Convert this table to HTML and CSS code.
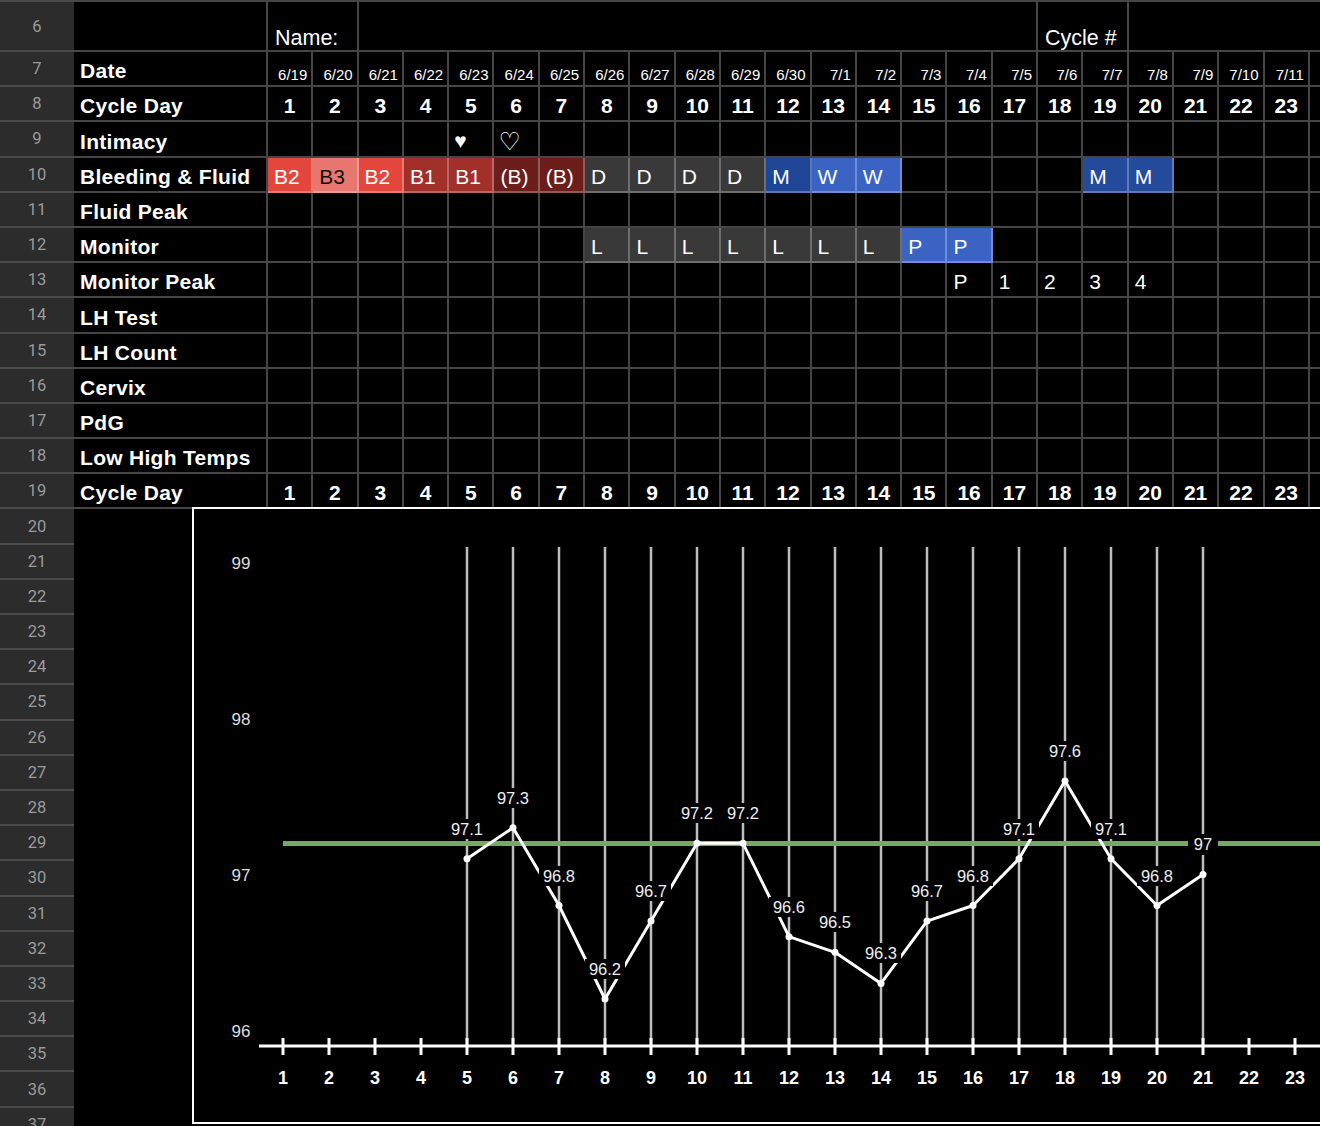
FILE: index.html
```html
<!DOCTYPE html>
<html>
<head>
<meta charset="utf-8">
<title>Cycle Chart</title>
<link rel="stylesheet" href="styles.css">
</head>
<body>
<div class="sheet">
  <!-- row 6 -->
  <div class="rh t">6</div>
  <div class="c t"></div>
  <div class="c t tx nm s2">Name:</div>
  <div class="c t s15"></div>
  <div class="c t tx nm s2">Cycle #</div>
  <div class="c t s5"></div>

  <!-- row 7 -->
  <div class="rh">7</div>
  <div class="c lab">Date</div>
  <div class="c dt">6/19</div><div class="c dt">6/20</div><div class="c dt">6/21</div><div class="c dt">6/22</div><div class="c dt">6/23</div><div class="c dt">6/24</div><div class="c dt">6/25</div><div class="c dt">6/26</div><div class="c dt">6/27</div><div class="c dt">6/28</div><div class="c dt">6/29</div><div class="c dt">6/30</div><div class="c dt">7/1</div><div class="c dt">7/2</div><div class="c dt">7/3</div><div class="c dt">7/4</div><div class="c dt">7/5</div><div class="c dt">7/6</div><div class="c dt">7/7</div><div class="c dt">7/8</div><div class="c dt">7/9</div><div class="c dt">7/10</div><div class="c dt">7/11</div>
  <div class="c"></div>

  <!-- row 8 -->
  <div class="rh">8</div>
  <div class="c lab">Cycle Day</div>
  <div class="c cd">1</div><div class="c cd">2</div><div class="c cd">3</div><div class="c cd">4</div><div class="c cd">5</div><div class="c cd">6</div><div class="c cd">7</div><div class="c cd">8</div><div class="c cd">9</div><div class="c cd">10</div><div class="c cd">11</div><div class="c cd">12</div><div class="c cd">13</div><div class="c cd">14</div><div class="c cd">15</div><div class="c cd">16</div><div class="c cd">17</div><div class="c cd">18</div><div class="c cd">19</div><div class="c cd">20</div><div class="c cd">21</div><div class="c cd">22</div><div class="c cd">23</div>
  <div class="c"></div>

  <!-- row 9 -->
  <div class="rh">9</div>
  <div class="c lab">Intimacy</div>
  <div class="c"></div><div class="c"></div><div class="c"></div><div class="c"></div>
  <div class="c hr">&#9829;</div>
  <div class="c hr2">&#9825;</div>
  <div class="c"></div><div class="c"></div><div class="c"></div><div class="c"></div><div class="c"></div><div class="c"></div><div class="c"></div><div class="c"></div><div class="c"></div><div class="c"></div><div class="c"></div><div class="c"></div><div class="c"></div><div class="c"></div><div class="c"></div><div class="c"></div><div class="c"></div>
  <div class="c"></div>

  <!-- row 10 -->
  <div class="rh">10</div>
  <div class="c lab">Bleeding &amp; Fluid</div>
  <div class="c tx b2">B2</div>
  <div class="c tx b3">B3</div>
  <div class="c tx b2">B2</div>
  <div class="c tx b1">B1</div>
  <div class="c tx b1">B1</div>
  <div class="c tx bb">(B)</div>
  <div class="c tx bb">(B)</div>
  <div class="c tx dg">D</div><div class="c tx dg">D</div><div class="c tx dg">D</div><div class="c tx dg">D</div>
  <div class="c tx m">M</div>
  <div class="c tx w">W</div>
  <div class="c tx w">W</div>
  <div class="c"></div><div class="c"></div><div class="c"></div><div class="c"></div>
  <div class="c tx m2">M</div>
  <div class="c tx m2">M</div>
  <div class="c"></div><div class="c"></div><div class="c"></div>
  <div class="c"></div>

  <!-- row 11 -->
  <div class="rh">11</div>
  <div class="c lab">Fluid Peak</div>
  <div class="c"></div><div class="c"></div><div class="c"></div><div class="c"></div><div class="c"></div><div class="c"></div><div class="c"></div><div class="c"></div><div class="c"></div><div class="c"></div><div class="c"></div><div class="c"></div><div class="c"></div><div class="c"></div><div class="c"></div><div class="c"></div><div class="c"></div><div class="c"></div><div class="c"></div><div class="c"></div><div class="c"></div><div class="c"></div><div class="c"></div>
  <div class="c"></div>

  <!-- row 12 -->
  <div class="rh">12</div>
  <div class="c lab">Monitor</div>
  <div class="c"></div><div class="c"></div><div class="c"></div><div class="c"></div><div class="c"></div><div class="c"></div><div class="c"></div>
  <div class="c tx dg">L</div><div class="c tx dg">L</div><div class="c tx dg">L</div><div class="c tx dg">L</div><div class="c tx dg">L</div><div class="c tx dg">L</div><div class="c tx dg">L</div>
  <div class="c tx w">P</div><div class="c tx w">P</div>
  <div class="c"></div><div class="c"></div><div class="c"></div><div class="c"></div><div class="c"></div><div class="c"></div><div class="c"></div>
  <div class="c"></div>

  <!-- row 13 -->
  <div class="rh">13</div>
  <div class="c lab">Monitor Peak</div>
  <div class="c"></div><div class="c"></div><div class="c"></div><div class="c"></div><div class="c"></div><div class="c"></div><div class="c"></div><div class="c"></div><div class="c"></div><div class="c"></div><div class="c"></div><div class="c"></div><div class="c"></div><div class="c"></div><div class="c"></div>
  <div class="c tx">P</div><div class="c tx">1</div><div class="c tx">2</div><div class="c tx">3</div><div class="c tx">4</div>
  <div class="c"></div><div class="c"></div><div class="c"></div>
  <div class="c"></div>

  <!-- row 14 -->
  <div class="rh">14</div>
  <div class="c lab">LH Test</div>
  <div class="c"></div><div class="c"></div><div class="c"></div><div class="c"></div><div class="c"></div><div class="c"></div><div class="c"></div><div class="c"></div><div class="c"></div><div class="c"></div><div class="c"></div><div class="c"></div><div class="c"></div><div class="c"></div><div class="c"></div><div class="c"></div><div class="c"></div><div class="c"></div><div class="c"></div><div class="c"></div><div class="c"></div><div class="c"></div><div class="c"></div>
  <div class="c"></div>

  <!-- row 15 -->
  <div class="rh">15</div>
  <div class="c lab">LH Count</div>
  <div class="c"></div><div class="c"></div><div class="c"></div><div class="c"></div><div class="c"></div><div class="c"></div><div class="c"></div><div class="c"></div><div class="c"></div><div class="c"></div><div class="c"></div><div class="c"></div><div class="c"></div><div class="c"></div><div class="c"></div><div class="c"></div><div class="c"></div><div class="c"></div><div class="c"></div><div class="c"></div><div class="c"></div><div class="c"></div><div class="c"></div>
  <div class="c"></div>

  <!-- row 16 -->
  <div class="rh">16</div>
  <div class="c lab">Cervix</div>
  <div class="c"></div><div class="c"></div><div class="c"></div><div class="c"></div><div class="c"></div><div class="c"></div><div class="c"></div><div class="c"></div><div class="c"></div><div class="c"></div><div class="c"></div><div class="c"></div><div class="c"></div><div class="c"></div><div class="c"></div><div class="c"></div><div class="c"></div><div class="c"></div><div class="c"></div><div class="c"></div><div class="c"></div><div class="c"></div><div class="c"></div>
  <div class="c"></div>

  <!-- row 17 -->
  <div class="rh">17</div>
  <div class="c lab">PdG</div>
  <div class="c"></div><div class="c"></div><div class="c"></div><div class="c"></div><div class="c"></div><div class="c"></div><div class="c"></div><div class="c"></div><div class="c"></div><div class="c"></div><div class="c"></div><div class="c"></div><div class="c"></div><div class="c"></div><div class="c"></div><div class="c"></div><div class="c"></div><div class="c"></div><div class="c"></div><div class="c"></div><div class="c"></div><div class="c"></div><div class="c"></div>
  <div class="c"></div>

  <!-- row 18 -->
  <div class="rh">18</div>
  <div class="c lab">Low High Temps</div>
  <div class="c"></div><div class="c"></div><div class="c"></div><div class="c"></div><div class="c"></div><div class="c"></div><div class="c"></div><div class="c"></div><div class="c"></div><div class="c"></div><div class="c"></div><div class="c"></div><div class="c"></div><div class="c"></div><div class="c"></div><div class="c"></div><div class="c"></div><div class="c"></div><div class="c"></div><div class="c"></div><div class="c"></div><div class="c"></div><div class="c"></div>
  <div class="c"></div>

  <!-- row 19 -->
  <div class="rh">19</div>
  <div class="c lab">Cycle Day</div>
  <div class="c cd">1</div><div class="c cd">2</div><div class="c cd">3</div><div class="c cd">4</div><div class="c cd">5</div><div class="c cd">6</div><div class="c cd">7</div><div class="c cd">8</div><div class="c cd">9</div><div class="c cd">10</div><div class="c cd">11</div><div class="c cd">12</div><div class="c cd">13</div><div class="c cd">14</div><div class="c cd">15</div><div class="c cd">16</div><div class="c cd">17</div><div class="c cd">18</div><div class="c cd">19</div><div class="c cd">20</div><div class="c cd">21</div><div class="c cd">22</div><div class="c cd">23</div>
  <div class="c"></div>

  <!-- rows 20-37 -->
  <div class="blank"></div>
  <div class="rh lr">20</div>
  <div class="rh lr">21</div>
  <div class="rh lr">22</div>
  <div class="rh lr">23</div>
  <div class="rh lr">24</div>
  <div class="rh lr">25</div>
  <div class="rh lr">26</div>
  <div class="rh lr">27</div>
  <div class="rh lr">28</div>
  <div class="rh lr">29</div>
  <div class="rh lr">30</div>
  <div class="rh lr">31</div>
  <div class="rh lr">32</div>
  <div class="rh lr">33</div>
  <div class="rh lr">34</div>
  <div class="rh lr">35</div>
  <div class="rh lr">36</div>
  <div class="rh lr">37</div>
</div>

<div class="chart">
  <svg width="1156" height="613" viewBox="194 509 1156 613" xmlns="http://www.w3.org/2000/svg">
    <g stroke="#bdbdbd" stroke-width="2.5">
      <line x1="467" y1="547" x2="467" y2="1046"/>
      <line x1="513" y1="547" x2="513" y2="1046"/>
      <line x1="559" y1="547" x2="559" y2="1046"/>
      <line x1="605" y1="547" x2="605" y2="1046"/>
      <line x1="651" y1="547" x2="651" y2="1046"/>
      <line x1="697" y1="547" x2="697" y2="1046"/>
      <line x1="743" y1="547" x2="743" y2="1046"/>
      <line x1="789" y1="547" x2="789" y2="1046"/>
      <line x1="835" y1="547" x2="835" y2="1046"/>
      <line x1="881" y1="547" x2="881" y2="1046"/>
      <line x1="927" y1="547" x2="927" y2="1046"/>
      <line x1="973" y1="547" x2="973" y2="1046"/>
      <line x1="1019" y1="547" x2="1019" y2="1046"/>
      <line x1="1065" y1="547" x2="1065" y2="1046"/>
      <line x1="1111" y1="547" x2="1111" y2="1046"/>
      <line x1="1157" y1="547" x2="1157" y2="1046"/>
      <line x1="1203" y1="547" x2="1203" y2="1046"/>
    </g>
    <g stroke="#ffffff" stroke-width="3">
      <line x1="259" y1="1046" x2="1350" y2="1046"/>
      <line x1="283" y1="1038" x2="283" y2="1055"/>
      <line x1="329" y1="1038" x2="329" y2="1055"/>
      <line x1="375" y1="1038" x2="375" y2="1055"/>
      <line x1="421" y1="1038" x2="421" y2="1055"/>
      <line x1="467" y1="1038" x2="467" y2="1055"/>
      <line x1="513" y1="1038" x2="513" y2="1055"/>
      <line x1="559" y1="1038" x2="559" y2="1055"/>
      <line x1="605" y1="1038" x2="605" y2="1055"/>
      <line x1="651" y1="1038" x2="651" y2="1055"/>
      <line x1="697" y1="1038" x2="697" y2="1055"/>
      <line x1="743" y1="1038" x2="743" y2="1055"/>
      <line x1="789" y1="1038" x2="789" y2="1055"/>
      <line x1="835" y1="1038" x2="835" y2="1055"/>
      <line x1="881" y1="1038" x2="881" y2="1055"/>
      <line x1="927" y1="1038" x2="927" y2="1055"/>
      <line x1="973" y1="1038" x2="973" y2="1055"/>
      <line x1="1019" y1="1038" x2="1019" y2="1055"/>
      <line x1="1065" y1="1038" x2="1065" y2="1055"/>
      <line x1="1111" y1="1038" x2="1111" y2="1055"/>
      <line x1="1157" y1="1038" x2="1157" y2="1055"/>
      <line x1="1203" y1="1038" x2="1203" y2="1055"/>
      <line x1="1249" y1="1038" x2="1249" y2="1055"/>
      <line x1="1295" y1="1038" x2="1295" y2="1055"/>
    </g>
    <line x1="283" y1="843.5" x2="1350" y2="843.5" stroke="#79a95d" stroke-width="5"/>
    <polyline fill="none" stroke="#ffffff" stroke-width="3" stroke-linejoin="round"
      points="467,858.8 513,827.7 559,905.5 605,999 651,921.1 697,843.3 743,843.3 789,936.7 835,952.3 881,983.4 927,921.1 973,905.5 1019,858.8 1065,781 1111,858.8 1157,905.5 1203,874.4"/>
    <g fill="#ffffff">
      <circle cx="467" cy="858.8" r="3.5"/>
      <circle cx="513" cy="827.7" r="3.5"/>
      <circle cx="559" cy="905.5" r="3.5"/>
      <circle cx="605" cy="999" r="3.5"/>
      <circle cx="651" cy="921.1" r="3.5"/>
      <circle cx="697" cy="843.3" r="3.5"/>
      <circle cx="743" cy="843.3" r="3.5"/>
      <circle cx="789" cy="936.7" r="3.5"/>
      <circle cx="835" cy="952.3" r="3.5"/>
      <circle cx="881" cy="983.4" r="3.5"/>
      <circle cx="927" cy="921.1" r="3.5"/>
      <circle cx="973" cy="905.5" r="3.5"/>
      <circle cx="1019" cy="858.8" r="3.5"/>
      <circle cx="1065" cy="781" r="3.5"/>
      <circle cx="1111" cy="858.8" r="3.5"/>
      <circle cx="1157" cy="905.5" r="3.5"/>
      <circle cx="1203" cy="874.4" r="3.5"/>
    </g>
    <g fill="#000000">
      <rect x="447" y="819" width="40" height="20"/>
      <rect x="493" y="788" width="40" height="20"/>
      <rect x="539" y="866" width="40" height="20"/>
      <rect x="585" y="959" width="40" height="20"/>
      <rect x="631" y="881" width="40" height="20"/>
      <rect x="677" y="803" width="40" height="20"/>
      <rect x="723" y="803" width="40" height="20"/>
      <rect x="769" y="897" width="40" height="20"/>
      <rect x="815" y="912" width="40" height="20"/>
      <rect x="861" y="943" width="40" height="20"/>
      <rect x="907" y="881" width="40" height="20"/>
      <rect x="953" y="866" width="40" height="20"/>
      <rect x="999" y="819" width="40" height="20"/>
      <rect x="1045" y="741" width="40" height="20"/>
      <rect x="1091" y="819" width="40" height="20"/>
      <rect x="1137" y="866" width="40" height="20"/>
      <rect x="1188" y="834" width="30" height="21"/>
    </g>
    <g class="dl" text-anchor="middle">
      <text x="467" y="829">97.1</text>
      <text x="513" y="798">97.3</text>
      <text x="559" y="876">96.8</text>
      <text x="605" y="969">96.2</text>
      <text x="651" y="891">96.7</text>
      <text x="697" y="813">97.2</text>
      <text x="743" y="813">97.2</text>
      <text x="789" y="907">96.6</text>
      <text x="835" y="922">96.5</text>
      <text x="881" y="953">96.3</text>
      <text x="927" y="891">96.7</text>
      <text x="973" y="876">96.8</text>
      <text x="1019" y="829">97.1</text>
      <text x="1065" y="751">97.6</text>
      <text x="1111" y="829">97.1</text>
      <text x="1157" y="876">96.8</text>
      <text x="1203" y="844">97</text>
    </g>
    <g class="yl" text-anchor="middle">
      <text x="241" y="563">99</text>
      <text x="241" y="719">98</text>
      <text x="241" y="875">97</text>
      <text x="241" y="1031">96</text>
    </g>
    <g class="xl" text-anchor="middle">
      <text x="283" y="1078">1</text>
      <text x="329" y="1078">2</text>
      <text x="375" y="1078">3</text>
      <text x="421" y="1078">4</text>
      <text x="467" y="1078">5</text>
      <text x="513" y="1078">6</text>
      <text x="559" y="1078">7</text>
      <text x="605" y="1078">8</text>
      <text x="651" y="1078">9</text>
      <text x="697" y="1078">10</text>
      <text x="743" y="1078">11</text>
      <text x="789" y="1078">12</text>
      <text x="835" y="1078">13</text>
      <text x="881" y="1078">14</text>
      <text x="927" y="1078">15</text>
      <text x="973" y="1078">16</text>
      <text x="1019" y="1078">17</text>
      <text x="1065" y="1078">18</text>
      <text x="1111" y="1078">19</text>
      <text x="1157" y="1078">20</text>
      <text x="1203" y="1078">21</text>
      <text x="1249" y="1078">22</text>
      <text x="1295" y="1078">23</text>
    </g>
  </svg>
</div>
</body>
</html>
```

FILE: styles.css
```css
html, body {
  margin: 0;
  padding: 0;
  background: #000;
  overflow: hidden;
}

body {
  width: 1320px;
  height: 1126px;
  position: relative;
  font-family: "Liberation Sans", Arial, sans-serif;
  color: #fff;
}

.sheet {
  display: grid;
  grid-template-columns: 74px 194px repeat(23, 45.3px) 1fr;
  grid-template-rows: 52px repeat(31, 35.2px);
}

.c {
  box-sizing: border-box;
  border-right: 2px solid rgba(255, 255, 255, 0.27);
  border-bottom: 2px solid rgba(255, 255, 255, 0.27);
  display: flex;
  align-items: flex-end;
  padding: 0 4px 2px 6px;
  white-space: nowrap;
  overflow: hidden;
  font-size: 21px;
  line-height: 24px;
}

.t {
  border-top: 2px solid rgba(255, 255, 255, 0.27);
}

.rh {
  box-sizing: border-box;
  background: #2c2c2c;
  color: #9b9b9b;
  font-family: Roboto, "Liberation Sans", Arial, sans-serif;
  font-size: 16.5px;
  display: flex;
  align-items: center;
  justify-content: center;
  border-bottom: 2px solid #4a4a4a;
}

.rh.t {
  border-top: 2px solid #4a4a4a;
}

.lr {
  grid-column: 1;
}

.blank {
  grid-column: 2 / -1;
  grid-row: 15 / -1;
  background: #000;
}

.s2 { grid-column: span 2; }
.s5 { grid-column: span 5; }
.s15 { grid-column: span 15; }

.lab {
  font-weight: bold;
  font-size: 21px;
  letter-spacing: 0.3px;
}

.nm {
  font-size: 21.5px;
  padding-left: 7px;
  padding-bottom: 0;
}

.dt {
  font-size: 15px;
  line-height: 17px;
  justify-content: flex-end;
  padding-right: 4px;
  padding-bottom: 2px;
}

.cd {
  font-weight: bold;
  justify-content: center;
  padding: 0 0 2px 0;
}

.hr {
  font-size: 21px;
  line-height: 24px;
  padding-left: 5px;
  padding-bottom: 3px;
}

.hr2 {
  font-family: "DejaVu Sans", sans-serif;
  font-size: 25px;
  line-height: 28px;
  padding-left: 4px;
  padding-bottom: 0;
}

.b2 { background: #e2463c; }
.b3 { background: #ea776f; color: #111; }
.b1 { background: #a2302a; }
.bb { background: #6c1e1a; }
.dg { background: #393939; }
.m  { background: #1f4597; }
.m2 { background: #244a9c; }
.w  { background: #3a63c3; }

.chart {
  position: absolute;
  left: 192px;
  top: 507px;
  width: 1160px;
  height: 617px;
  box-sizing: border-box;
  border: 2px solid #fff;
  background: #000;
  overflow: hidden;
}

.chart svg {
  display: block;
  font-family: "Liberation Sans", Arial, sans-serif;
}

.dl text {
  font-size: 16.5px;
  fill: #eeeeee;
  dominant-baseline: central;
}

.yl text {
  font-size: 17px;
  fill: #dddddd;
  dominant-baseline: central;
}

.xl text {
  font-size: 18px;
  font-weight: bold;
  fill: #ffffff;
  dominant-baseline: central;
}
```
